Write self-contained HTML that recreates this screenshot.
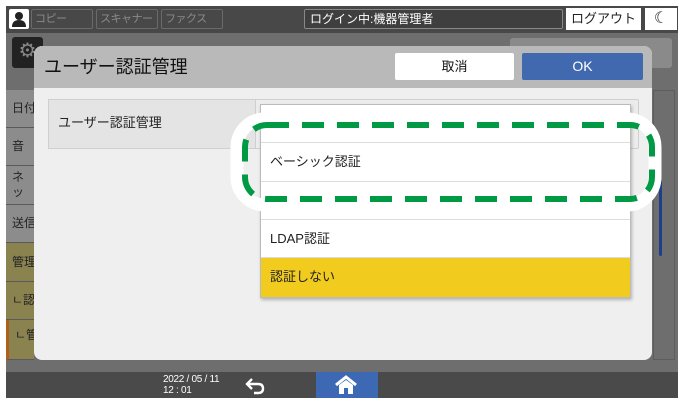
<!DOCTYPE html>
<html><head><meta charset="utf-8"><style>
*{margin:0;padding:0;box-sizing:border-box}
body{width:684px;height:404px;background:#fff;position:relative;overflow:hidden;font-family:"Liberation Sans","Noto Sans CJK JP",sans-serif}
.a{position:absolute}
.tab{position:absolute;top:9px;height:20px;border:1px solid #6a6a6a;border-radius:2px;color:#8a8a8a;font-size:11px;line-height:18px;padding-left:3px;white-space:nowrap;overflow:hidden;letter-spacing:-0.5px}
.li{position:absolute;left:6px;width:28px;border-bottom:1px solid #5a5a5a;font-size:12px;color:#222;padding-left:6px;white-space:nowrap;overflow:hidden}
.it{position:absolute;left:261px;width:369px;background:#fff;border-bottom:1px solid #ddd;font-size:13px;color:#222;padding-left:9px}
</style></head><body>
<div class="a" style="left:6px;top:6px;width:672px;height:392px;background:#6e6e6e"></div>
<div class="a" style="left:6px;top:6px;width:672px;height:27px;background:#484848"></div>
<div class="a" style="left:9px;top:9px;width:20px;height:20px;background:#fff;border-radius:2px"></div>
<svg class="a" style="left:9px;top:9px" width="20" height="20"><circle cx="10" cy="7" r="4" fill="#222"/><path d="M3 18 Q3 11 10 11 Q17 11 17 18Z" fill="#222"/></svg>
<div class="tab" style="left:31px;width:62px">コピー</div>
<div class="tab" style="left:96px;width:62px">スキャナー</div>
<div class="tab" style="left:161px;width:62px">ファクス</div>
<div class="a" style="left:304px;top:9px;width:259px;height:20px;border:1px solid #888;border-radius:2px;background:#3f3f3f;color:#fff;font-size:12px;line-height:18px;padding-left:5px">ログイン中:機器管理者</div>
<div class="a" style="left:566px;top:8px;width:75px;height:22px;background:#fff;font-size:13px;line-height:22px;text-align:center;color:#222">ログアウト</div>
<div class="a" style="left:645px;top:8px;width:32px;height:22px;background:#fff;font-size:16px;line-height:22px;text-align:center;color:#222">☾</div>
<div class="a" style="left:12px;top:37px;width:31px;height:31px;background:#222;border-radius:3px;color:#888;font-size:20px;line-height:28px;text-align:center">⚙</div>
<div class="a" style="left:510px;top:38px;width:162px;height:30px;background:#8a8a8a;border-radius:3px"></div>
<div class="li" style="top:90px;height:38px;background:#8c8c8c;line-height:36px">日付</div>
<div class="li" style="top:128px;height:38px;background:#8c8c8c;line-height:36px">音</div>
<div class="li" style="top:166px;height:39px;background:#8c8c8c;line-height:15px;padding-top:4px;white-space:normal;word-break:break-all;width:28px">ネッ ーク</div>
<div class="li" style="top:205px;height:38px;background:#8c8c8c;line-height:36px">送信</div>
<div class="li" style="top:243px;height:39px;background:#8a8350;line-height:38px">管理</div>
<div class="li" style="top:282px;height:38px;background:#8a8350;line-height:36px">ㄴ認</div>
<div class="li" style="top:320px;height:40px;background:#8a8350;border-left:3px solid #b0601a;line-height:30px">ㄴ管</div>
<div class="a" style="left:653px;top:90px;width:22px;height:270px;border:1px solid #5d5d5d"></div>
<div class="a" style="left:659px;top:180px;width:3px;height:76px;background:#1d3f8a;border-radius:2px"></div>
<div class="a" style="left:6px;top:372px;width:672px;height:26px;background:#4a4a4a"></div>
<div class="a" style="left:163px;top:374px;color:#fff;font-size:10px;line-height:11px;letter-spacing:-0.3px">2022 / 05 / 11<br>12 : 01</div>
<svg class="a" style="left:244px;top:375px" width="24" height="20"><path d="M8 4 L3 9 L8 14 M3 9 H14 Q19 9 19 13.5 Q19 18 14 18 H10" fill="none" stroke="#fff" stroke-width="2.4"/></svg>
<div class="a" style="left:316px;top:372px;width:62px;height:26px;background:#3d68b4"></div>
<svg class="a" style="left:334px;top:375px" width="24" height="20"><path d="M2 10 L12 2 L22 10" fill="none" stroke="#fff" stroke-width="3"/><path d="M5 10 V19 H10 V13 H14 V19 H19 V10 L12 5Z" fill="#fff"/></svg>
<div class="a" style="left:34px;top:46px;width:618px;height:314px;background:#efefef;border-radius:8px;overflow:hidden">
 <div class="a" style="left:0;top:0;width:618px;height:42px;background:#b9b9b9"></div>
 <div class="a" style="left:10px;top:9px;font-size:18px;color:#111;line-height:24px">ユーザー認証管理</div>
 <div class="a" style="left:361px;top:7px;width:119px;height:27px;background:#fff;border-radius:2px;text-align:center;line-height:27px;font-size:13px;color:#111">取消</div>
 <div class="a" style="left:488px;top:7px;width:121px;height:27px;background:#4169b0;border-radius:2px;text-align:center;line-height:27px;font-size:14px;color:#fff">OK</div>
 <div class="a" style="left:14px;top:53px;width:591px;height:50px;border:1px solid #cfcfcf;border-radius:2px;background:#ececec"></div>
 <div class="a" style="left:14px;top:53px;width:208px;height:50px;border:1px solid #cfcfcf;background:#e4e4e4;font-size:13px;color:#222;line-height:46px;padding-left:9px">ユーザー認証管理</div>
</div>
<div class="a" style="left:260px;top:104px;width:371px;height:194px;background:#fff;border:1px solid #bbb;box-shadow:1px 2px 3px rgba(0,0,0,.25)"></div>
<div class="it" style="top:105px;height:38px"></div>
<div class="it" style="top:143px;height:39px;line-height:38px">ベーシック認証</div>
<div class="it" style="top:182px;height:38px"></div>
<div class="it" style="top:220px;height:38px;line-height:38px">LDAP認証</div>
<div class="it" style="top:258px;height:39px;background:#f2cb1f;border-bottom:none;line-height:38px">認証しない</div>
<svg class="a" style="left:0;top:0" width="684" height="404">
<rect x="237" y="119" width="418" height="86" rx="28" fill="none" stroke="#fff" stroke-width="13"/>
<rect x="245" y="125" width="407" height="74" rx="22" fill="none" stroke="#009944" stroke-width="6" stroke-dasharray="22 13"/>
</svg>
</body></html>
